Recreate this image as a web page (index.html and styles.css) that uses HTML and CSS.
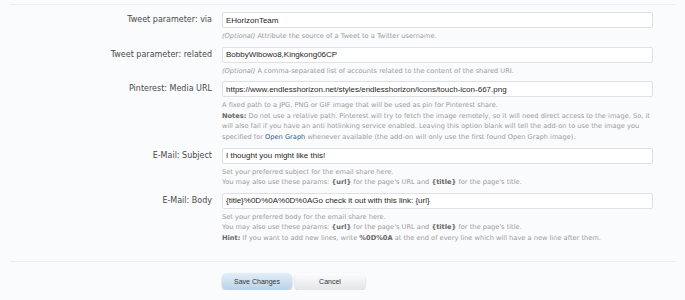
FILE: index.html
```html
<!DOCTYPE html>
<html>
<head>
    <title>Share Options</title>
    <link rel="stylesheet" href="styles.css">
</head>
<body>
    <form class="options-form">
        <div class="option-row">
            <label class="option-label" for="via">Tweet parameter: via</label>
            <div class="option-field">
                <input type="text" id="via" class="text-input" value="EHorizonTeam">
                <p class="explain"><i>(Optional)</i> Attribute the source of a Tweet to a Twitter username.</p>
            </div>
        </div>
        <div class="option-row">
            <label class="option-label" for="related">Tweet parameter: related</label>
            <div class="option-field">
                <input type="text" id="related" class="text-input" value="BobbyWibowo8,Kingkong06CP">
                <p class="explain"><i>(Optional)</i> A comma-separated list of accounts related to the content of the shared URI.</p>
            </div>
        </div>
        <div class="option-row">
            <label class="option-label" for="media">Pinterest: Media URL</label>
            <div class="option-field">
                <input type="text" id="media" class="text-input" value="https://www.endlesshorizon.net/styles/endlesshorizon/icons/touch-icon-667.png">
                <p class="explain">A fixed path to a JPG, PNG or GIF image that will be used as pin for Pinterest share.<br>
                <b>Notes:</b> Do not use a relative path. Pinterest will try to fetch the image remotely, so it will need direct access to the image. So, it will also fail if you have an anti hotlinking service enabled. Leaving this option blank will tell the add-on to use the image you specified for <a href="#">Open Graph</a> whenever available (the add-on will only use the first found Open Graph image).</p>
            </div>
        </div>
        <div class="option-row">
            <label class="option-label" for="subject">E-Mail: Subject</label>
            <div class="option-field">
                <input type="text" id="subject" class="text-input" value="I thought you might like this!">
                <p class="explain">Set your preferred subject for the email share here.<br>
                You may also use these params: <b>{url}</b> for the page's URL and <b>{title}</b> for the page's title.</p>
            </div>
        </div>
        <div class="option-row">
            <label class="option-label" for="body">E-Mail: Body</label>
            <div class="option-field">
                <input type="text" id="body" class="text-input" value="{title}%0D%0A%0D%0AGo check it out with this link: {url}">
                <p class="explain">Set your preferred body for the email share here.<br>
                You may also use these params: <b>{url}</b> for the page's URL and <b>{title}</b> for the page's title.<br>
                <b>Hint:</b> If you want to add new lines, write <b>%0D%0A</b> at the end of every line which will have a new line after them.</p>
            </div>
        </div>
        <div class="submit-unit">
            <input type="submit" class="button primary" value="Save Changes">
            <input type="reset" class="button" value="Cancel">
        </div>
    </form>
</body>
</html>
```

FILE: styles.css
```css
body {
    margin: 0;
    background: #fafbfd;
    font-family: "DejaVu Sans", Verdana, sans-serif;
}
.options-form {
    margin: 0 9px 0 10px;
    padding-top: 4px;
}
.option-row {
    display: grid;
    grid-template-columns: 202px 431px;
    column-gap: 10px;
    padding-top: 5px;
    padding-bottom: 0;
}
.options-form .option-row:first-child {
    border-top: 1px solid #e9eef3;
    padding-top: 7px;
}
.option-label {
    text-align: right;
    font-size: 8px;
    color: #4a4a4a;
    line-height: 16px;
}
.text-input {
    display: block;
    width: 100%;
    height: 16px;
    box-sizing: border-box;
    margin: 0;
    padding: 0 3px;
    border: 1px solid #dde1e6;
    border-radius: 2px;
    background: #fff;
    font-family: "Liberation Sans", Arial, sans-serif;
    font-size: 8px;
    color: #1e1e1e;
}
.explain {
    margin: 3px 0 0 0;
    font-family: "DejaVu Sans", Verdana, sans-serif;
    font-size: 6.65px;
    line-height: 10.6px;
    color: #9a9a9a;
}
.explain b {
    color: #666;
}
.explain a {
    color: #2b5e8e;
    text-decoration: none;
}
.submit-unit {
    margin-top: 17px;
    border-top: 1px solid #e9eef3;
    padding: 11px 0 0 212px;
    display: flex;
    gap: 3px;
}
.button {
    width: 70px;
    height: 17px;
    border: none;
    border-radius: 5px;
    font-family: "Liberation Sans", Arial, sans-serif;
    font-size: 7px;
    color: #333;
    background: linear-gradient(#fdfdfe, #e3e5ea);
    box-shadow: 0 1px 2px rgba(0, 0, 0, 0.25);
    cursor: pointer;
}
.button.primary {
    background: linear-gradient(#e2eef8, #b9d2e8);
}
```
